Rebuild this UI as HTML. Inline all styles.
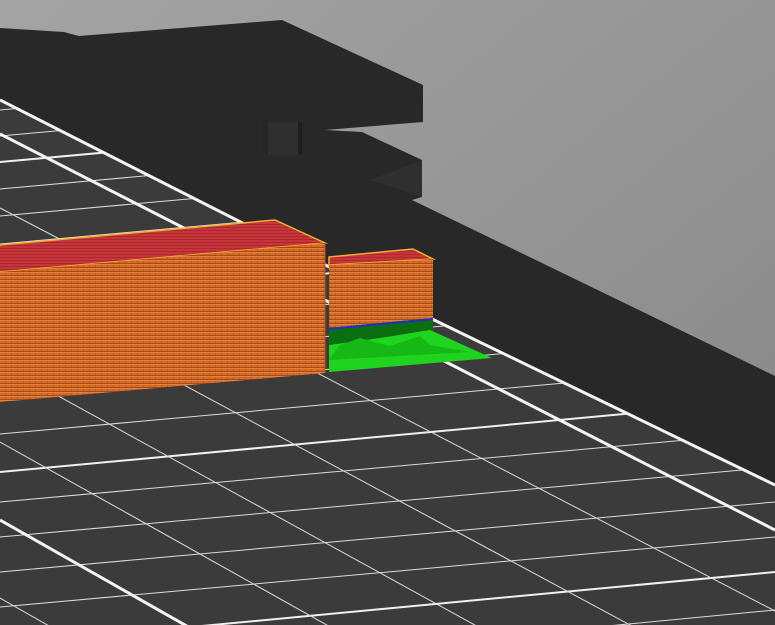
<!DOCTYPE html>
<html><head><meta charset="utf-8"><style>
html,body{margin:0;padding:0;width:775px;height:625px;overflow:hidden;background:#999}
svg{display:block}
</style></head><body>
<svg width="775" height="625" viewBox="0 0 775 625" xmlns="http://www.w3.org/2000/svg">
<defs>
<linearGradient id="bg" x1="0" y1="0" x2="1" y2="1">
<stop offset="0" stop-color="#a4a4a4"/><stop offset="1" stop-color="#868686"/>
</linearGradient>
<pattern id="org" width="6" height="4" patternUnits="userSpaceOnUse">
<rect width="6" height="4" fill="#d66a28"/>
<rect y="3" width="6" height="1" fill="#a44c18"/>
<rect x="5" width="1" height="3" fill="#bf5b20"/>
<rect y="0" width="6" height="1" fill="#e58238"/>
</pattern>
<pattern id="red" width="4" height="3" patternUnits="userSpaceOnUse">
<rect width="4" height="3" fill="#c8343a"/><rect y="2" width="4" height="1" fill="#a82a30"/>
</pattern>
<clipPath id="gc"><polygon points="0,100 430,318 775,485 775,625 0,625"/></clipPath>
</defs>
<rect width="775" height="625" fill="url(#bg)"/>
<polygon points="0,28 64,32 79,36 282,20 423,85 423,122 325,130 362,132 422,160 422,197 412,200 775,376 775,625 0,625" fill="#282828"/>
<polygon points="370,180 422,160 422,197" fill="#2f2f2f"/>
<rect x="262" y="122" width="38" height="33" fill="#2f2f2f"/>
<rect x="262" y="122" width="6" height="33" fill="#262626"/>
<rect x="298" y="122" width="4" height="33" fill="#1f1f1f"/>
<g clip-path="url(#gc)">
<rect width="775" height="625" fill="#3b3b3b"/>
<g stroke="#dcdcdc" stroke-width="1" fill="none">
<line x1="0" y1="110" x2="775" y2="40"/>
<line x1="0" y1="136" x2="775" y2="66"/>
<line x1="0" y1="189" x2="775" y2="119"/>
<line x1="0" y1="216" x2="775" y2="146"/>
<line x1="0" y1="244" x2="775" y2="174"/>
<line x1="0" y1="273" x2="775" y2="203"/>
<line x1="0" y1="334" x2="775" y2="264"/>
<line x1="0" y1="366" x2="775" y2="296"/>
<line x1="0" y1="399" x2="775" y2="329"/>
<line x1="0" y1="434" x2="775" y2="364"/>
<line x1="0" y1="502" x2="775" y2="432"/>
<line x1="0" y1="537" x2="775" y2="467"/>
<line x1="0" y1="572" x2="775" y2="502"/>
<line x1="0" y1="607" x2="775" y2="537"/>
<line x1="0" y1="684" x2="775" y2="610"/>
</g>
<g stroke="#f0f0f0" stroke-width="2" fill="none">
<line x1="0" y1="162" x2="775" y2="92"/>
<line x1="0" y1="303" x2="775" y2="233"/>
<line x1="0" y1="472" x2="775" y2="400"/>
<line x1="0" y1="645" x2="775" y2="572"/>
</g>
<g stroke="#dcdcdc" stroke-width="1" fill="none">
<line x1="0" y1="208" x2="775" y2="611"/>
<line x1="0" y1="286" x2="775" y2="703"/>
<line x1="0" y1="364" x2="775" y2="790"/>
<line x1="0" y1="442" x2="775" y2="876"/>
<line x1="0" y1="598" x2="775" y2="1040"/>
</g>
<g stroke="#f4f4f4" stroke-width="3" fill="none">
<polyline points="0,134 448,363 775,530"/>
<line x1="0" y1="520" x2="775" y2="960"/>
</g>
</g>
<polyline points="0,100 430,318 775,485" stroke="#f4f4f4" stroke-width="3" fill="none"/>
<polygon points="329,257 413,249 433,259 329,265" fill="url(#red)" stroke="#f0b030" stroke-width="1.5"/>
<polygon points="329,265 433,259 433,318 329,328" fill="url(#org)"/>
<polygon points="329,328 433,318 433,340 329,348" fill="#0b6e10"/>
<polygon points="329,345 380,338 430,330 492,358 329,372" fill="#1ed41e"/>
<polygon points="340,345 360,338 390,346 420,336 430,345 470,352 329,360" fill="#16b816"/>
<line x1="329" y1="329" x2="433" y2="319" stroke="#2030c0" stroke-width="2"/>
<polygon points="0,245 275,220 325,243 0,272" fill="url(#red)"/>
<polyline points="0,245 275,220 325,243 0,272" fill="none" stroke="#f0b030" stroke-width="1.5"/>
<polygon points="0,272 325,243 325,373 0,402" fill="url(#org)"/>
<line x1="325" y1="243" x2="325" y2="373" stroke="#b8561c" stroke-width="1"/>
</svg>
</body></html>
